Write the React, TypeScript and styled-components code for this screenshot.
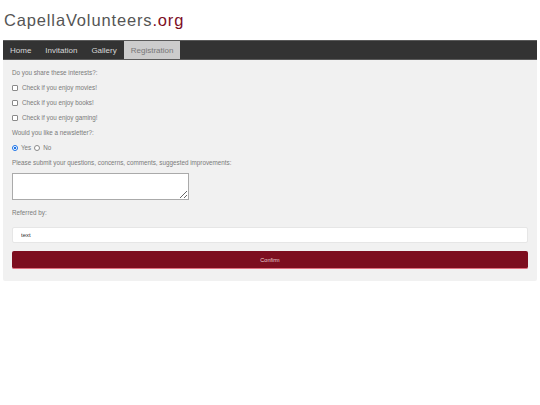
import { createGlobalStyle, styled } from 'styled-components';

const GlobalStyle = createGlobalStyle`
    html, body {
        margin: 0;
        padding: 0;
        background: #ffffff;
        font-family: "Liberation Sans", Arial, sans-serif;
    }
`;

const Page = styled.div`
    width: 540px;
    padding: 0 3px;
    box-sizing: border-box;
`;

const Header = styled.h1`
    margin: 0;
    height: 40px;
    padding: 10px 1px 0;
    box-sizing: border-box;
    font-size: 16.5px;
    font-weight: 400;
    letter-spacing: 0.85px;
    line-height: 20px;
    color: #555555;
`;

const Accent = styled.span`
    color: #7d0e1f;
`;

const NavBar = styled.nav`
    display: flex;
    height: 20px;
    background: #333333;
    border-top: 1px solid #5a5a5a;
    border-bottom: 1px solid #5a5a5a;
    box-sizing: border-box;
`;

const NavItem = styled.a<{ $active?: boolean }>`
    display: flex;
    align-items: center;
    padding: 0 7px;
    font-size: 8px;
    color: ${(p) => (p.$active ? '#777777' : '#d8d8d8')};
    background: ${(p) => (p.$active ? '#cccccc' : 'transparent')};
    text-decoration: none;
`;

const Panel = styled.form`
    display: flex;
    flex-direction: column;
    background: #f1f1f1;
    padding: 5px 9px 12px;
    border-radius: 0 0 2px 2px;
`;

const Row = styled.label`
    display: flex;
    align-items: center;
    gap: 3px;
    height: 15px;
    font-size: 6.3px;
    color: #7a7a7a;
`;

const Check = styled.input`
    appearance: none;
    width: 6px;
    height: 6px;
    margin: 0 1px 0 0;
    box-sizing: border-box;
    border: 1px solid #8a8a8a;
    border-radius: 1px;
    background: #ffffff;
`;

const Radio = styled.input`
    appearance: none;
    width: 6px;
    height: 6px;
    margin: 0;
    box-sizing: border-box;
    border: 1px solid #8a8a8a;
    border-radius: 50%;
    background: #ffffff;

    &:checked {
        border: 1.5px solid #1a73e8;
        background: radial-gradient(circle, #1a73e8 0 45%, #ffffff 50%);
    }
`;

const Comments = styled.textarea`
    margin-top: 3px;
    width: 177px;
    height: 27px;
    box-sizing: border-box;
    border: 1px solid #aaaaaa;
    background: #ffffff;
    resize: vertical;
`;

const Spaced = styled(Row)`
    margin-top: 5px;
`;

const TextField = styled.input`
    margin-top: 7px;
    height: 16px;
    box-sizing: border-box;
    border: 1px solid #e6e6e6;
    border-radius: 2px;
    background: #ffffff;
    padding: 0 8px;
    font-family: "Liberation Sans", Arial, sans-serif;
    font-size: 6px;
    color: #333333;
    outline: none;
`;

const ConfirmButton = styled.button`
    margin-top: 8px;
    height: 18px;
    border: 0;
    border-bottom: 1px solid #e07080;
    border-radius: 2px;
    background: #7d0e1f;
    color: #e8d0d4;
    font-family: "Liberation Sans", Arial, sans-serif;
    font-size: 5.5px;
    cursor: pointer;
`;

const interests = ['movies', 'books', 'gaming'];

const App = () => {
    return (
        <Page>
            <GlobalStyle />
            <Header>
                CapellaVolunteers<Accent>.org</Accent>
            </Header>
            <NavBar>
                <NavItem href="#">Home</NavItem>
                <NavItem href="#">Invitation</NavItem>
                <NavItem href="#">Gallery</NavItem>
                <NavItem href="#" $active>Registration</NavItem>
            </NavBar>
            <Panel onSubmit={(e) => e.preventDefault()}>
                <Row as="div">Do you share these interests?:</Row>
                {interests.map((item) => (
                    <Row key={item}>
                        <Check type="checkbox" />
                        Check if you enjoy {item}!
                    </Row>
                ))}
                <Row as="div">Would you like a newsletter?:</Row>
                <Row as="div">
                    <Radio type="radio" name="newsletter" defaultChecked />
                    Yes
                    <Radio type="radio" name="newsletter" />
                    No
                </Row>
                <Row as="div">Please submit your questions, concerns, comments, suggested improvements:</Row>
                <Comments />
                <Spaced as="div">Referred by:</Spaced>
                <TextField type="text" defaultValue="text" />
                <ConfirmButton type="submit">Confirm</ConfirmButton>
            </Panel>
        </Page>
    );
};

export default App;
